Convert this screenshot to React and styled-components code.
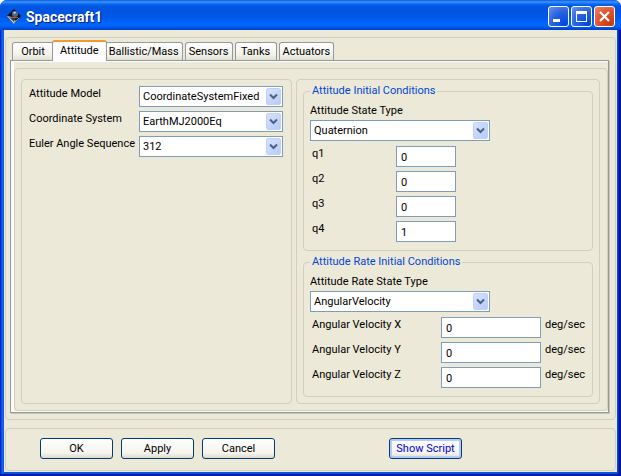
import React, { useState } from "react";
import styled, { createGlobalStyle } from "styled-components";

const GlobalStyle = createGlobalStyle`
  *, *::before, *::after { box-sizing: border-box; }
  body {
    margin: 0;
    background: #fff;
    color: #000;
    font: 11px/14px Tahoma, Roboto, sans-serif;
  }
  button, input, select { font: inherit; color: inherit; margin: 0; }
`;

const Window = styled.div`
  display: flex;
  flex-direction: column;
  min-height: 100vh;
  padding: 0 4px 4px;
  border-radius: 7px 7px 0 0;
  background: linear-gradient(90deg, #0019cf 0, #0831d9 1px, #166aee 2px, #0855dd 4px, #0855dd calc(100% - 4px), #0040dc calc(100% - 3px), #0013b0 calc(100% - 2px), #00138c 100%);
  box-shadow: inset 0 -2px 0 #0019a8;
`;

const TitleBar = styled.header`
  display: flex;
  align-items: center;
  gap: 5px;
  height: 30px;
  margin: 0 -4px;
  padding: 3px 6px 0 7px;
  border-radius: 7px 7px 0 0;
  background: linear-gradient(180deg, #0a5be0 0, #3f93ff 2px, #0a6bf2 4px, #0057e4 6px, #0054e0 12px, #0058ea 17px, #0066ff 23px, #0066fc 26px, #0050e0 28px, #0040c8 30px);
`;

const Title = styled.h1`
  flex: 1;
  margin: 0;
  color: #fff;
  font: bold 14px/18px "Trebuchet MS", Roboto, sans-serif;
  text-shadow: 1px 1px 1px #0a1883;
`;

const Captions = styled.div`
  display: flex;
  gap: 2px;
`;

const CaptionButton = styled.button`
  display: grid;
  place-items: center;
  width: 21px;
  height: 21px;
  padding: 0;
  border: 1px solid #fff;
  border-radius: 3px;
  background: ${(p) =>
    p.$close
      ? "radial-gradient(circle at 85% 90%, #c83a10, #e0532c 55%, #e88a6c)"
      : "radial-gradient(circle at 85% 90%, #0048e0, #2a62e0 55%, #6a94ee)"};
`;

const Client = styled.main`
  flex: 1;
  display: flex;
  flex-direction: column;
  gap: 8px;
  padding: 7px 1px 1px;
  background: #ece9d8;
`;

const Panel = styled.section`
  flex: ${(p) => (p.$grow ? "1" : "none")};
  min-width: 0;
  padding: ${(p) => p.$pad || "0"};
  border: 1px solid #d0d0bf;
  border-radius: 4px;
`;

const Notebook = styled(Panel)`
  display: flex;
  flex-direction: column;
  padding: 2px 6px 6px 4px;
`;

const TabStrip = styled.div`
  display: flex;
  align-items: flex-end;
  height: 20px;
  padding-left: 2px;
`;

const Tab = styled.button`
  position: relative;
  height: ${(p) => (p.$active ? "21px" : "18px")};
  min-width: 42px;
  margin: ${(p) => (p.$active ? "0 -2px -1px" : "0 2px 0 0")};
  padding: ${(p) => (p.$active ? "0 7px 2px" : "0 3px")};
  border: 1px solid #919b9c;
  border-bottom: 0;
  border-top: ${(p) => (p.$active ? "2px solid #f09a30" : "1px solid #919b9c")};
  border-radius: 3px 3px 0 0;
  background: ${(p) => (p.$active ? "#fcfcfe" : "linear-gradient(#fff, #f2f1e9 70%, #e2e0d0)")};
  z-index: ${(p) => (p.$active ? 1 : 0)};
  white-space: nowrap;

  &:first-child { margin-right: 0; }
`;

const Page = styled.div`
  flex: 1;
  display: flex;
  flex-direction: column;
  padding: 7px 0 1px 3px;
  border: 1px solid #919b9c;
  box-shadow: inset 3px 0 0 #fcfcfe, inset 0 1px 0 #fcfcfe, inset 0 -1px 0 #fcfcfe, 1px 1px 0 #c8c5b4;
`;

const Columns = styled(Panel)`
  display: grid;
  grid-template-columns: 271fr 304fr;
  gap: 4px;
  padding: 10px 7px 6px 6px;
`;

const ModelForm = styled.div`
  display: grid;
  grid-template-columns: 106px 144px;
  gap: 4px;
  align-items: start;
`;

const Label = styled.label`
  padding-top: 1px;
  white-space: nowrap;
`;

const Unit = styled.span`
  padding-top: 1px;
`;

const Group = styled.fieldset`
  min-width: 0;
  margin: 0;
  padding: 5px 6px 8px;
  border: 1px solid #d0d0bf;
  border-radius: 4px;
`;

const Legend = styled.legend`
  padding: 0 2px;
  color: #0046d5;
`;

const Stack = styled.div`
  display: flex;
  flex-direction: column;
  gap: 4px;
`;

const TypeField = styled.div`
  display: grid;
  grid-template-columns: 180px;
  gap: 2px;
  margin-bottom: 5px;
`;

const Rows = styled.div`
  display: grid;
  grid-template-columns: ${(p) => p.$columns};
  column-gap: 4px;
  row-gap: 4px;
  padding-left: 2px;
  align-items: start;
`;

const TextBox = styled.input`
  width: 100%;
  height: 21px;
  padding: 1px 4px 0;
  border: 1px solid #7f9db9;
  border-radius: 0;
  background: #fff;
`;

const Combo = styled.div`
  position: relative;
  height: 21px;
`;

const ComboSelect = styled.select`
  appearance: none;
  width: 100%;
  height: 21px;
  padding: 1px 18px 0 3px;
  border: 1px solid #7f9db9;
  border-radius: 0;
  background: #fff;
`;

const ComboArrow = styled.span`
  position: absolute;
  top: 2px;
  right: 2px;
  display: grid;
  place-items: center;
  width: 15px;
  height: 17px;
  border: 1px solid #c1d0f8;
  border-radius: 2px;
  background: linear-gradient(135deg, #d6e2fe, #b7caf8);
  pointer-events: none;
`;

const ButtonBar = styled(Panel)`
  display: flex;
  gap: 8px;
  padding: 9px 34px 11px;
`;

const Button = styled.button`
  width: 73px;
  height: 21px;
  padding: 0;
  margin-left: ${(p) => (p.$apart ? "106px" : "0")};
  border: 1px solid #003c74;
  border-radius: 3px;
  background: linear-gradient(#fff, #f4f3ec 75%, #dcd8cc);
  color: ${(p) => (p.$apart ? "#0000e0" : "#000")};
  box-shadow: ${(p) => (p.$apart ? "inset 0 0 0 2px #b4cbf6" : "none")};
  white-space: nowrap;
`;

function SpacecraftIcon() {
  return (
    <svg width="14" height="16" viewBox="0 0 14 16" aria-hidden="true">
      <path d="M7 0 14 7 7 15 0 7Z" fill="#10131c" />
      <path d="M0 7 7 15 9 12 3 7Z" fill="#d8dde0" />
      <path d="M1 7 9 8 7 13Z" fill="#383c40" />
      <circle cx="8" cy="5" r="3" fill="#51658c" />
      <path d="M6 4Q7 2 9 3L8 5Z" fill="#c4cfdf" />
      <path d="M3 8.500 11 8.500" stroke="#a35b55" strokeWidth="1" />
      <path d="m7 14 5-5" stroke="#7e9a80" strokeWidth="1" />
    </svg>
  );
}

function Dropdown({ id, options }) {
  return (
    <Combo>
      <ComboSelect id={id} defaultValue={options[0]}>
        {options.map((o) => (
          <option key={o}>{o}</option>
        ))}
      </ComboSelect>
      <ComboArrow>
        <svg width="9" height="7" viewBox="0 0 9 7" aria-hidden="true">
          <path d="M1 1.5 4.5 5 8 1.5" fill="none" stroke="#4d6185" strokeWidth="2" />
        </svg>
      </ComboArrow>
    </Combo>
  );
}

const tabs = ["Orbit", "Attitude", "Ballistic/Mass", "Sensors", "Tanks", "Actuators"];

const modelFields = [
  ["Attitude Model", "CoordinateSystemFixed"],
  ["Coordinate System", "EarthMJ2000Eq"],
  ["Euler Angle Sequence", "312"],
];

const quaternion = [["q1", "0"], ["q2", "0"], ["q3", "0"], ["q4", "1"]];

export default function App() {
  const [active, setActive] = useState("Attitude");
  return (
    <>
      <GlobalStyle />
      <Window>
        <TitleBar>
          <SpacecraftIcon />
          <Title>Spacecraft1</Title>
          <Captions>
            <CaptionButton aria-label="Minimize">
              <svg width="19" height="19" viewBox="0 0 19 19">
                <path d="M4 12h7v3H4z" fill="#fff" />
              </svg>
            </CaptionButton>
            <CaptionButton aria-label="Maximize">
              <svg width="19" height="19" viewBox="0 0 19 19">
                <path d="M4 4h11v11H4zM5 7v7h9V7z" fill="#fff" fillRule="evenodd" />
              </svg>
            </CaptionButton>
            <CaptionButton $close aria-label="Close">
              <svg width="19" height="19" viewBox="0 0 19 19">
                <path d="m5 5 9 9m0-9-9 9" stroke="#fff" strokeWidth="2.2" />
              </svg>
            </CaptionButton>
          </Captions>
        </TitleBar>
        <Client>
          <Notebook $grow>
            <TabStrip role="tablist">
              {tabs.map((t) => (
                <Tab
                  key={t}
                  role="tab"
                  aria-selected={t === active}
                  $active={t === active}
                  onClick={() => setActive(t)}
                >
                  {t}
                </Tab>
              ))}
            </TabStrip>
            <Page role="tabpanel">
              <Columns $grow>
                <Panel $pad="6px 8px 6px 7px">
                  <ModelForm>
                    {modelFields.map(([name, value]) => (
                      <React.Fragment key={name}>
                        <Label htmlFor={name}>{name}</Label>
                        <Dropdown id={name} options={[value]} />
                      </React.Fragment>
                    ))}
                  </ModelForm>
                </Panel>
                <Panel $pad="4px 6px 6px">
                  <Stack>
                    <Group>
                      <Legend>Attitude Initial Conditions</Legend>
                      <TypeField>
                        <Label htmlFor="state">Attitude State Type</Label>
                        <Dropdown id="state" options={["Quaternion"]} />
                      </TypeField>
                      <Rows $columns="80px 60px">
                        {quaternion.map(([name, value]) => (
                          <React.Fragment key={name}>
                            <Label htmlFor={name}>{name}</Label>
                            <TextBox id={name} defaultValue={value} />
                          </React.Fragment>
                        ))}
                      </Rows>
                    </Group>
                    <Group>
                      <Legend>Attitude Rate Initial Conditions</Legend>
                      <TypeField>
                        <Label htmlFor="rate">Attitude Rate State Type</Label>
                        <Dropdown id="rate" options={["AngularVelocity"]} />
                      </TypeField>
                      <Rows $columns="125px 100px auto">
                        {["X", "Y", "Z"].map((axis) => (
                          <React.Fragment key={axis}>
                            <Label htmlFor={axis}>Angular Velocity {axis}</Label>
                            <TextBox id={axis} defaultValue="0" />
                            <Unit>deg/sec</Unit>
                          </React.Fragment>
                        ))}
                      </Rows>
                    </Group>
                  </Stack>
                </Panel>
              </Columns>
            </Page>
          </Notebook>
          <ButtonBar>
            <Button>OK</Button>
            <Button>Apply</Button>
            <Button>Cancel</Button>
            <Button $apart>Show Script</Button>
          </ButtonBar>
        </Client>
      </Window>
    </>
  );
}
